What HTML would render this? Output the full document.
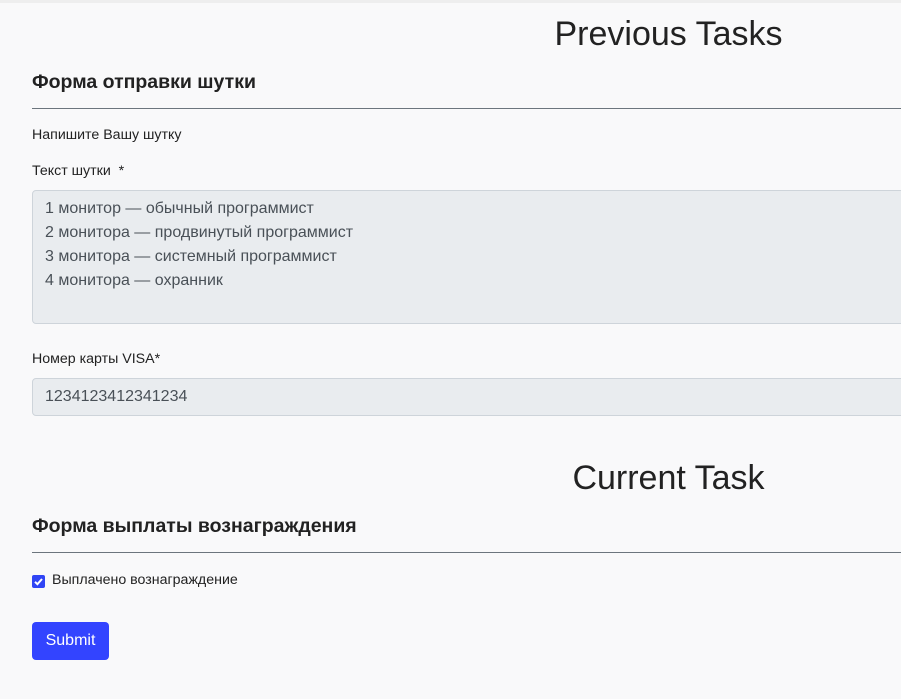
<!DOCTYPE html>
<html><head><meta charset="utf-8"><style>
*{margin:0;padding:0;box-sizing:border-box}
body{width:901px;height:699px;background:#f9f9fa;font-family:"Liberation Sans","Noto Sans CJK SC",sans-serif;color:#212529;position:relative;overflow:hidden}
.a{position:absolute;white-space:nowrap}
.t{font-size:34px;color:#222;width:901px;left:218px;text-align:center}
.h{font-size:19.5px;font-weight:bold;color:#222;left:32px}
.hr{position:absolute;left:32px;width:900px;height:1px;background:#6c757d}
.s{font-size:14.2px;left:32px;color:#222}
.f{position:absolute;left:32px;width:900px;background:#e9ecef;border:1px solid #ced4da;border-radius:4px;font-size:16px;color:#495057;padding:0 12px}
</style></head><body>
<div style="position:absolute;top:0;left:0;width:901px;height:3px;background:#eee"></div>
<div class="a t" style="top:15px">Previous Tasks</div>
<div class="a h" style="top:71px">Форма отправки шутки</div>
<div class="hr" style="top:108px"></div>
<div class="a s" style="top:127px">Напишите Вашу шутку</div>
<div class="a s" style="top:163px">Текст шутки &nbsp;*</div>
<div class="f" style="top:190px;height:134px;padding-top:6px;line-height:24px">1 монитор — обычный программист<br>2 монитора — продвинутый программист<br>3 монитора — системный программист<br>4 монитора — охранник</div>
<div class="a s" style="top:351px">Номер карты VISA*</div>
<div class="f" style="top:378px;height:38px;line-height:35px">1234123412341234</div>
<div class="a t" style="top:459px">Current Task</div>
<div class="a h" style="top:515px">Форма выплаты вознаграждения</div>
<div class="hr" style="top:552px"></div>
<div style="position:absolute;left:32px;top:575px;width:13px;height:13px;background:#3045f5;border-radius:2px"><svg width="13" height="13" viewBox="0 0 13 13"><path d="M3 6.8l2.4 2.4L10 4" stroke="#fff" stroke-width="2" fill="none"/></svg></div>
<div class="a s" style="top:572px;left:52px">Выплачено вознаграждение</div>
<div style="position:absolute;left:32px;top:622px;width:77px;height:38px;background:#3344ff;border-radius:4px;color:#fff;font-size:16px;line-height:37px;text-align:center">Submit</div>
</body></html>
